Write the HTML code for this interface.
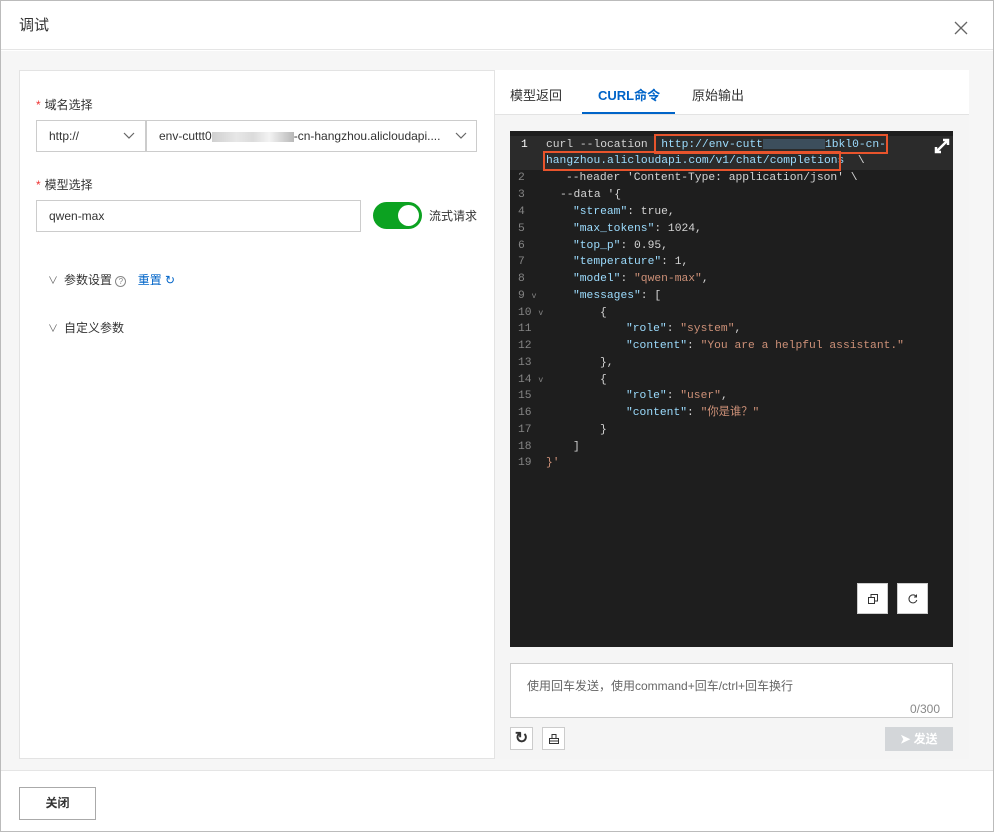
<!DOCTYPE html>
<html><head><meta charset="utf-8"><style>
*{box-sizing:border-box;margin:0;padding:0}
body{width:994px;height:832px;background:#fff;font-family:"Liberation Sans","Noto Sans CJK SC",sans-serif;font-size:12px;color:#333;position:relative;overflow:hidden}
.abs{position:absolute}
.frame{left:0;top:0;width:994px;height:832px;border:1px solid #bbb}
.hdr{left:1px;top:1px;width:992px;height:49px;border-bottom:1px solid #e5e5e5}
.body{left:1px;top:51px;width:992px;height:719px;background:#f6f6f6}
.ftr{left:1px;top:770px;width:992px;height:61px;border-top:1px solid #e5e5e5;background:#fff}
.left{left:19px;top:70px;width:476px;height:689px;background:#fff;border:1px solid #e3e3e3}
.right{left:495px;top:70px;width:474px;height:689px;background:#f5f5f5}
.tabs{left:0;top:0;width:474px;height:45px;background:#fff;border-bottom:1px solid #e3e3e3}
.inp{border:1px solid #ccc;background:#fff;height:32px;line-height:30px;padding-left:12px;font-size:12px;color:#333}
.lbl{font-size:12px;color:#333}
.req{color:#e33;margin-right:4px}
.code{left:510px;top:131px;width:443px;height:516px;background:#1e1e1e;font-family:"Liberation Mono","Noto Sans CJK SC",monospace;font-size:11.3px}
.ln{position:absolute;left:8px;width:20px;color:#858585;text-align:left;font-size:11.3px;line-height:14px;height:14px;overflow:visible}
.c{position:absolute;white-space:pre;color:#d4d4d4;line-height:14px;height:14px}
.k{color:#9cdcfe}.s{color:#ce9178}
.btn{border:1px solid #ccc;background:#fff}
</style></head><body>
<div class="abs frame"></div>
<div class="abs hdr"><div class="abs" style="left:18px;top:13px;font-size:15px;color:#333">调试</div>
<svg class="abs" style="left:953px;top:20px" width="14" height="14"><path d="M1 1L13 13M13 1L1 13" stroke="#666" stroke-width="1.3"/></svg></div>
<div class="abs body"></div>
<div class="abs left">
 <div class="abs lbl" style="left:16px;top:25px"><span class="req">*</span>域名选择</div>
 <div class="abs inp" style="left:16px;top:49px;width:110px;height:32px">http://<svg class="abs" style="left:86px;top:11px" width="12" height="8"><path d="M1 1L6 6L11 1" stroke="#666" fill="none" stroke-width="1.2"/></svg></div>
 <div class="abs inp" style="left:126px;top:49px;width:331px;height:32px">env-cuttt0<span style="display:inline-block;width:82px;height:10px;background:linear-gradient(90deg,#bbb,#ddd 30%,#ccc 50%,#eee 70%,#999);vertical-align:middle;opacity:.7"></span>-cn-hangzhou.alicloudapi....<svg class="abs" style="left:308px;top:11px" width="12" height="8"><path d="M1 1L6 6L11 1" stroke="#666" fill="none" stroke-width="1.2"/></svg></div>
 <div class="abs lbl" style="left:16px;top:105px"><span class="req">*</span>模型选择</div>
 <div class="abs inp" style="left:16px;top:129px;width:325px;height:32px">qwen-max</div>
 <div class="abs" style="left:353px;top:131px;width:49px;height:27px;border-radius:14px;background:#0ca221"><div class="abs" style="left:25px;top:3px;width:21px;height:21px;border-radius:50%;background:#fff"></div></div>
 <div class="abs lbl" style="left:409px;top:136px">流式请求</div>
 <div class="abs lbl" style="left:28px;top:200px"><span style="color:#666;font-size:10px;margin-right:6px">∨</span>参数设置 <span style="display:inline-block;width:11px;height:11px;border:1px solid #888;border-radius:50%;font-size:8px;line-height:9px;text-align:center;color:#888">?</span> <span style="color:#0064c8;margin-left:8px">重置</span> <span style="color:#0064c8">↻</span></div>
 <div class="abs lbl" style="left:28px;top:248px"><span style="color:#666;font-size:10px;margin-right:6px">∨</span>自定义参数</div>
</div>
<div class="abs right">
 <div class="abs tabs">
  <div class="abs" style="left:15px;top:15px;font-size:13px;color:#333">模型返回</div>
  <div class="abs" style="left:103px;top:15px;font-size:13px;color:#0064c8;font-weight:bold">CURL命令</div>
  <div class="abs" style="left:87px;top:42px;width:93px;height:2px;background:#0064c8"></div>
  <div class="abs" style="left:197px;top:15px;font-size:13px;color:#333">原始输出</div>
 </div>
</div>
<div class="abs code">
 <div class="abs" style="left:0;top:5px;width:443px;height:34px;background:#2b2b2b"></div>
 <div class="ln" style="top:7px;color:#fff;left:11px">1</div>
 <div class="c" style="left:36px;top:7px">curl --location  <span class="k">http://env-cutt</span><span style="display:inline-block;width:62px;height:10px;background:#3c4e5c;vertical-align:middle"></span><span class="k">1bkl0-cn-</span></div>
 <div class="c k" style="left:36px;top:23px">hangzhou.alicloudapi.com/v1/chat/completions<span style="color:#d4d4d4">  \</span></div>
 <div class="abs" style="left:144px;top:3px;width:234px;height:20px;border:2px solid #e8542c"></div>
 <div class="abs" style="left:33px;top:20px;width:298px;height:20px;border:2px solid #e8542c"></div>
 <svg class="abs" style="left:423px;top:6px" width="18" height="18"><path d="M3 15L15 3M10 3H15V8M3 10V15H8" stroke="#fff" stroke-width="2.5" fill="none"/></svg>
 <div class="ln" style="top:40px">2</div><div class="c" style="left:56px;top:40px">--header 'Content-Type: application/json' \</div>
 <div class="ln" style="top:57px">3</div><div class="c" style="left:50px;top:57px">--data '{</div>
 <div class="ln" style="top:74px">4</div><div class="c" style="left:63px;top:74px"><span class="k">"stream"</span>: true,</div>
 <div class="ln" style="top:91px">5</div><div class="c" style="left:63px;top:91px"><span class="k">"max_tokens"</span>: 1024,</div>
 <div class="ln" style="top:108px">6</div><div class="c" style="left:63px;top:108px"><span class="k">"top_p"</span>: 0.95,</div>
 <div class="ln" style="top:124px">7</div><div class="c" style="left:63px;top:124px"><span class="k">"temperature"</span>: 1,</div>
 <div class="ln" style="top:141px">8</div><div class="c" style="left:63px;top:141px"><span class="k">"model"</span>: <span class="s">"qwen-max"</span>,</div>
 <div class="ln" style="top:158px">9 <span style="font-size:8px">v</span></div><div class="c" style="left:63px;top:158px"><span class="k">"messages"</span>: [</div>
 <div class="ln" style="top:175px;width:30px">10 <span style="font-size:8px">v</span></div><div class="c" style="left:90px;top:175px">{</div>
 <div class="ln" style="top:191px">11</div><div class="c" style="left:116px;top:191px"><span class="k">"role"</span>: <span class="s">"system"</span>,</div>
 <div class="ln" style="top:208px">12</div><div class="c" style="left:116px;top:208px"><span class="k">"content"</span>: <span class="s">"You are a helpful assistant."</span></div>
 <div class="ln" style="top:225px">13</div><div class="c" style="left:90px;top:225px">},</div>
 <div class="ln" style="top:242px;width:30px">14 <span style="font-size:8px">v</span></div><div class="c" style="left:90px;top:242px">{</div>
 <div class="ln" style="top:258px">15</div><div class="c" style="left:116px;top:258px"><span class="k">"role"</span>: <span class="s">"user"</span>,</div>
 <div class="ln" style="top:275px">16</div><div class="c" style="left:116px;top:275px"><span class="k">"content"</span>: <span class="s">"你是谁？"</span></div>
 <div class="ln" style="top:292px">17</div><div class="c" style="left:90px;top:292px">}</div>
 <div class="ln" style="top:309px">18</div><div class="c" style="left:63px;top:309px">]</div>
 <div class="ln" style="top:325px">19</div><div class="c s" style="left:36px;top:325px">}'</div>
 <div class="abs btn" style="left:347px;top:452px;width:31px;height:31px"><svg class="abs" style="left:9px;top:9px" width="12" height="12"><path d="M1.5 4.5H7.5V10.5H1.5ZM4 4.5V1.5H10.5V8H7.5" stroke="#333" fill="none"/></svg></div>
 <div class="abs btn" style="left:387px;top:452px;width:31px;height:31px"><svg class="abs" style="left:9px;top:9px" width="12" height="12"><path d="M9.5 4A4 4 0 1 0 9.8 7M9.5 1.5V4H7" stroke="#333" fill="none"/></svg></div>
</div>
<div class="abs" style="left:510px;top:663px;width:443px;height:55px;border:1px solid #ccc;background:#fff">
 <div class="abs" style="left:16px;top:13px;color:#666">使用回车发送，使用command+回车/ctrl+回车换行</div>
 <div class="abs" style="right:12px;top:38px;color:#888">0/300</div>
</div>
<div class="abs btn" style="left:510px;top:727px;width:23px;height:23px;font-size:16px;font-weight:bold;text-align:center;line-height:21px">↻</div>
<div class="abs btn" style="left:542px;top:727px;width:23px;height:23px"><svg class="abs" style="left:5px;top:5px" width="12" height="12"><path d="M1.5 5.5H10.5V10.5H1.5ZM4 5.5V1.5H8V5.5M1.5 8H10.5" stroke="#333" fill="none"/></svg></div>
<div class="abs" style="left:885px;top:727px;width:68px;height:24px;background:#d3d6d9;color:#fff;font-weight:bold;text-align:center;line-height:24px;font-size:12px">➤ 发送</div>
<div class="abs ftr"><div class="abs btn" style="left:18px;top:16px;width:77px;height:33px;border-color:#aaa;text-align:center;line-height:31px;font-weight:bold;color:#333">关闭</div></div>
</body></html>
